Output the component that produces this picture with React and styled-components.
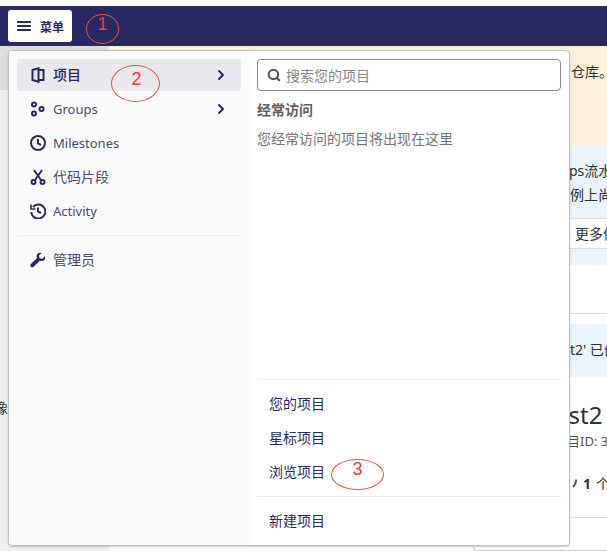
import styled, { createGlobalStyle } from 'styled-components';
import { ChevronRight, Search } from 'lucide-react';

const Global = createGlobalStyle`
    html, body {
        margin: 0;
        padding: 0;
        background: #fff;
    }
    body {
        width: 607px;
        height: 551px;
        overflow: hidden;
        font-family: "Noto Sans", "Noto Sans CJK SC", sans-serif;
    }
`;

const Page = styled.div`
    position: relative;
    width: 607px;
    height: 551px;
    padding-top: 6px;
    box-sizing: border-box;
    display: flex;
    flex-direction: column;
    overflow: hidden;
`;

const Navbar = styled.header`
    height: 40px;
    flex: none;
    background: #292961;
    display: flex;
    align-items: center;
    padding-left: 8px;
`;

const MenuButton = styled.button`
    width: 64px;
    height: 32px;
    border: 0;
    border-radius: 3px;
    background: #fff;
    color: #292961;
    display: flex;
    align-items: center;
    gap: 8px;
    padding: 0 0 0 8px;
    font: 600 12px "Noto Sans CJK SC", sans-serif;
`;

const Layout = styled.div`
    flex: 1;
    display: flex;
    min-height: 0;
`;

const Sidebar = styled.aside`
    width: 109px;
    flex: none;
    background: #f0f0f0;
    overflow: hidden;
`;

const SideActive = styled.div`
    height: 44px;
    background: #dcdce0;
`;

const SideNote = styled.div`
    margin: 308px 0 0 -6px;
    font: 14px/18px "Noto Sans CJK SC", sans-serif;
    color: #303030;
    white-space: nowrap;
`;

const Content = styled.main`
    flex: 1;
    min-width: 0;
    display: flex;
    flex-direction: column;
    font-family: "Noto Sans", "Noto Sans CJK SC", sans-serif;
    color: #303030;
    font-size: 14px;
    white-space: nowrap;
    overflow: hidden;
`;

const Alert = styled.div`
    background: ${p => (p.$tone === 'warn' ? '#fdf1dd' : '#e9f3fc')};
    height: ${p => p.$height}px;
    margin-top: ${p => p.$top || 0}px;
    padding-top: ${p => p.$pad}px;
    flex: none;
    box-sizing: border-box;
`;

const AlertLine = styled.div`
    height: 24px;
    line-height: 24px;
    padding-left: ${p => p.$left}px;
`;

const MoreButton = styled.div`
    height: 31px;
    margin-top: 11px;
    background: #fff;
    border-top: 1px solid #dbdbdb;
    border-bottom: 1px solid #dbdbdb;
    box-sizing: border-box;
    display: flex;
    align-items: center;
`;

const Rule = styled.div`
    height: 1px;
    background: #dbdbdb;
    margin-top: ${p => p.$top}px;
    flex: none;
`;

const ProjectTitle = styled.h1`
    margin: 24px 0 0 446px;
    font-size: 24px;
    font-weight: 400;
    line-height: 28px;
`;

const ProjectMeta = styled.div`
    font-size: 13px;
    line-height: 16px;
    margin: 4px 0 0 458px;
    color: #525252;
`;

const ProjectStat = styled.div`
    margin: 26px 0 0 453px;
    font-size: 14px;
    line-height: 18px;
    display: flex;
    align-items: center;
    gap: 5px;
    b { font-weight: 700; }
    svg { flex: none; }
`;

const ReadmeCard = styled.div`
    flex: 1;
    margin-left: 364px;
    border-left: 1px solid #c9c9c9;
    border-bottom: 1px solid #c9c9c9;
    border-bottom-left-radius: 4px;
`;

const Dropdown = styled.div`
    position: absolute;
    left: 8px;
    top: 50px;
    width: 562px;
    height: 496px;
    box-sizing: border-box;
    display: flex;
    background: #fff;
    border: 1px solid #bfbfbf;
    border-radius: 4px;
    box-shadow: 0 1px 2px rgba(0, 0, 0, 0.2);
    overflow: hidden;
`;

const MenuColumn = styled.nav`
    width: 240px;
    flex: none;
    background: #fafafa;
    padding: 8px 8px 0 8px;
    box-sizing: border-box;
`;

const MenuItem = styled.div`
    height: 32px;
    margin-bottom: 2px;
    border-radius: 4px;
    display: flex;
    align-items: center;
    padding: 0 12px 0 13px;
    gap: 7px;
    color: #292961;
    font-size: ${p => (p.$latin ? 13 : 14)}px;
    background: ${p => (p.$active ? '#e8e8ed' : 'transparent')};
    font-weight: ${p => (p.$active ? 500 : 400)};
    font-family: "Noto Sans", "Noto Sans CJK SC", sans-serif;
    span {
        flex: 1;
        opacity: ${p => (p.$active ? 1 : 0.85)};
        padding-bottom: ${p => (p.$latin ? 0 : 2)}px;
    }
    svg { flex: none; }
`;

const MenuDivider = styled.div`
    height: 1px;
    background: #efefef;
    margin: 8px 0;
`;

const PanelColumn = styled.section`
    flex: 1;
    padding: 8px 8px 0 8px;
    display: flex;
    flex-direction: column;
    font-family: "Noto Sans CJK SC", sans-serif;
    min-width: 0;
`;

const SearchBox = styled.div`
    height: 32px;
    box-sizing: border-box;
    border: 1px solid #868686;
    border-radius: 4px;
    display: flex;
    align-items: center;
    gap: 5px;
    padding-left: 9px;
    color: #868686;
    font-size: 14px;
    flex: none;
    svg { color: #525252; }
`;

const SectionTitle = styled.div`
    margin-top: 8px;
    font-size: 14px;
    line-height: 20px;
    font-weight: 700;
    color: #5e5e5e;
`;

const EmptyText = styled.div`
    margin-top: 9px;
    font-size: 14px;
    line-height: 20px;
    color: #737373;
`;

const PanelLinks = styled.div`
    margin-top: auto;
    display: flex;
    flex-direction: column;
`;

const PanelDivider = styled.div`
    height: 1px;
    background: #ececec;
`;

const PanelLink = styled.div`
    height: 34px;
    box-sizing: border-box;
    padding: 0 0 2px 12px;
    display: flex;
    align-items: center;
    font-size: 14px;
    color: #292961;
`;

const LinkGroup = styled.div`
    padding: 7px 0;
`;

const Annotation = styled.div`
    position: absolute;
    left: ${p => p.$x}px;
    top: ${p => p.$y}px;
    width: ${p => p.$w}px;
    height: ${p => p.$h}px;
    box-sizing: border-box;
    border: 1px solid #f0474a;
    border-radius: 50%;
    color: #f03a3d;
    font: 18px/1 "Liberation Sans", sans-serif;
    text-align: center;
    padding-top: ${p => p.$pad}px;
    text-indent: ${p => p.$shift || 0}px;
`;

const Ic = ({ children, size = 16 }) => (
    <svg width={size} height={size} viewBox="0 0 16 16" fill="none" stroke="#292961" strokeWidth="2">{children}</svg>
);

const items = [
    { label: '项目', active: true, arrow: true, icon: <Ic><path d="M2.5 3 8.5 1.2V14.8L2.5 13ZM8.5 3H13.5V13H8.5" /></Ic> },
    { label: 'Groups', latin: true, arrow: true, icon: <Ic><circle cx="4" cy="3.5" r="2" /><circle cx="4" cy="12.5" r="2" /><circle cx="11.5" cy="8" r="2" /></Ic> },
    { label: 'Milestones', latin: true, icon: <Ic><circle cx="8" cy="8" r="7" /><path d="M8 4V8.5L11 10" /></Ic> },
    { label: '代码片段', icon: <Ic><path d="M4 1 11 11M12 1 5 11" /><circle cx="3.5" cy="13" r="2" /><circle cx="12.5" cy="13" r="2" /></Ic> },
    { label: 'Activity', latin: true, icon: <Ic><path d="M3 4A7 7 0 1 1 1.3 9" /><path d="M1 1.5V6H5.5" strokeWidth="1.6" /><path d="M8 4.5V8.5L11 10" /></Ic> },
];

const Wrench = () => (
    <svg width="16" height="16" viewBox="0 0 16 16" fill="#292961">
        <path d="M15 4.2 12.4 6.8 9.6 6.2 9 3.4 11.7.9C9.6.3 7.6 1 6.9 2.8 6.5 3.9 6.6 5 7 6L.9 12.1C.2 12.8.1 13.9.9 14.8 1.7 15.6 2.9 15.5 3.6 14.8L9.8 8.7C10.9 9.2 12 9.2 13.1 8.8 14.9 8 15.6 6.2 15 4.2Z" />
    </svg>
);

const Hamburger = () => (
    <svg width="16" height="16" viewBox="0 0 16 16" fill="#292961">
        <rect x="1" y="3" width="14" height="2" rx="0.5" />
        <rect x="1" y="7" width="14" height="2" rx="0.5" />
        <rect x="1" y="11" width="14" height="2" rx="0.5" />
    </svg>
);

const Fork = () => (
    <svg width="16" height="16" viewBox="0 0 16 16" fill="none" stroke="#525252" strokeWidth="2">
        <path d="M14 3.5V5C14 7 13 9 11 11" />
    </svg>
);

const App = () => (
    <Page>
        <Global />
        <Navbar>
            <MenuButton>
                <Hamburger />
                菜单
            </MenuButton>
        </Navbar>
        <Layout>
            <Sidebar>
                <SideActive />
                <SideNote>像</SideNote>
            </Sidebar>
            <Content>
                <Alert $tone="warn" $height={100} $pad={14}>
                    <AlertLine $left={462}>仓库。</AlertLine>
                </Alert>
                <Alert $height={119} $pad={13}>
                    <AlertLine $left={460}>ps流水线</AlertLine>
                    <AlertLine $left={461}>例上尚</AlertLine>
                    <MoreButton><AlertLine $left={466}>更多信息</AlertLine></MoreButton>
                </Alert>
                <Rule $top={48} />
                <Alert $height={53} $top={10} $pad={14}>
                    <AlertLine $left={461}>t2' 已创建</AlertLine>
                </Alert>
                <ProjectTitle>est2</ProjectTitle>
                <ProjectMeta>目ID: 3</ProjectMeta>
                <ProjectStat><Fork /><b>1</b> 个</ProjectStat>
                <Rule $top={24} />
                <ReadmeCard />
            </Content>
        </Layout>
        <Dropdown>
            <MenuColumn>
                {items.map(item => (
                    <MenuItem key={item.label} $active={item.active} $latin={item.latin}>
                        {item.icon}
                        <span>{item.label}</span>
                        {item.arrow && <ChevronRight size={16} strokeWidth={3} />}
                    </MenuItem>
                ))}
                <MenuDivider />
                <MenuItem><Wrench /><span>管理员</span></MenuItem>
            </MenuColumn>
            <PanelColumn>
                <SearchBox><Search size={14} strokeWidth={3.5} />搜索您的项目</SearchBox>
                <SectionTitle>经常访问</SectionTitle>
                <EmptyText>您经常访问的项目将出现在这里</EmptyText>
                <PanelLinks>
                    <PanelDivider />
                    <LinkGroup>
                        <PanelLink>您的项目</PanelLink>
                        <PanelLink>星标项目</PanelLink>
                        <PanelLink>浏览项目</PanelLink>
                    </LinkGroup>
                    <PanelDivider />
                    <LinkGroup>
                        <PanelLink>新建项目</PanelLink>
                    </LinkGroup>
                </PanelLinks>
            </PanelColumn>
        </Dropdown>
        <Annotation $x={86} $y={14} $w={33} $h={30} $pad={0}>1</Annotation>
        <Annotation $x={111} $y={65} $w={49} $h={37} $pad={4} $shift={2}>2</Annotation>
        <Annotation $x={331} $y={459} $w={53} $h={31} $pad={0}>3</Annotation>
    </Page>
);

export default App;
